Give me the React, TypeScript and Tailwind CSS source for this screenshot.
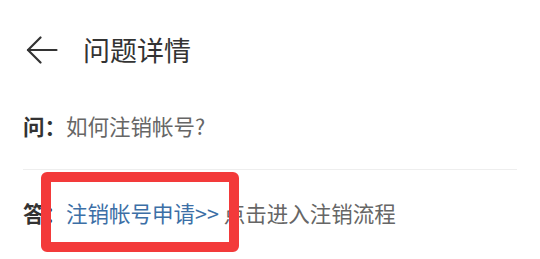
import React from 'react';

// Back arrow drawn to match the thin chevron + shaft in the header
function BackArrow() {
  return (
    <svg width="32" height="28" viewBox="0 0 32 28" fill="none" stroke="#333333" strokeWidth="2.2" strokeLinecap="round" strokeLinejoin="round">
      <path d="M30.5 14H2" />
      <path d="M14.5 1.5L2 14l12.5 12.5" />
    </svg>
  );
}

export default function App() {
  return (
    <div
      className="relative w-[540px] h-[259px] bg-white overflow-hidden"
      style={{ fontFamily: '"Noto Sans CJK SC", "Noto Sans", sans-serif' }}
    >
      <div className="flex items-center h-[100px] pl-[26px]">
        <BackArrow />
        <h1 className="ml-[25px] text-[27px] leading-[30px] text-[#333333] font-normal">问题详情</h1>
      </div>

      <div className="px-[23px] pt-[11px] text-[21.5px] leading-[30px] text-[#666666]">
        <span className="font-bold text-[#333333]">问：</span>如何注销帐号?
      </div>

      <div className="mx-[23px] mt-[28px] border-t border-[#eeeeee]" />

      <div className="px-[23px] pt-[28px] text-[21.5px] leading-[30px] text-[#666666]">
        <span className="font-bold text-[#333333]">答：</span>
        <a className="text-[#3c6fa6]">注销帐号申请&gt;&gt;</a> 点击进入注销流程
      </div>

      {/* highlight frame over the link */}
      <div className="absolute left-[41px] top-[172px] w-[198px] h-[80px] border-[10px] border-[#f33a3a] rounded-[6px]" />
    </div>
  );
}
